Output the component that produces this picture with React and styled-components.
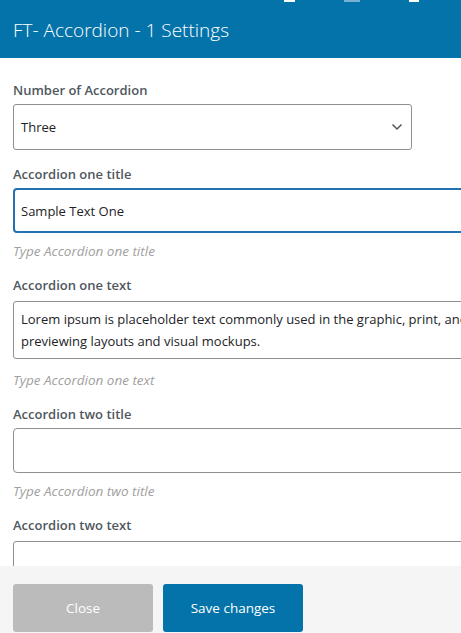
import React from 'react'
import styled, {createGlobalStyle} from 'styled-components'

const GlobalStyle = createGlobalStyle`
  html, body {
    margin: 0;
    padding: 0;
    background: #fff;
  }
  body {
    font-family: "Segoe UI", "Open Sans", sans-serif;
    overflow: hidden;
  }
`

const fields = [
    {label: 'Accordion one title', value: 'Sample Text One', hint: 'Type Accordion one title', focused: true},
    {label: 'Accordion one text', lines: ['Lorem ipsum is placeholder text commonly used in the graphic, print, and publishing industries for', 'previewing layouts and visual mockups.'], hint: 'Type Accordion one text'},
    {label: 'Accordion two title', value: '', hint: 'Type Accordion two title'},
    {label: 'Accordion two text', lines: [], hint: 'Type Accordion two text'},
]

const App = () => {
    return (
        <Page>
            <GlobalStyle />
            <Header>
                <TopMarks>
                    <Mark w={11} />
                    <Mark w={16} faint />
                    <Mark w={10} />
                </TopMarks>
                <Title>FT- Accordion - 1 Settings</Title>
            </Header>
            <Body>
                <Group>
                    <Label>Number of Accordion</Label>
                    <SelectBox>
                        <span>Three</span>
                        <svg width="12" height="8" viewBox="0 0 12 8">
                            <polyline points="1.5,1.5 6,6 10.5,1.5" fill="none" stroke="#50575e" strokeWidth="1.5" />
                        </svg>
                    </SelectBox>
                </Group>
                {fields.map(f => (
                    <Group key={f.label}>
                        <Label>{f.label}</Label>
                        {f.lines ? (
                            <TextArea>
                                {f.lines.map(l => <Line key={l}>{l}</Line>)}
                            </TextArea>
                        ) : (
                            <Input focused={f.focused}>{f.value}</Input>
                        )}
                        <Hint>{f.hint}</Hint>
                    </Group>
                ))}
            </Body>
            <Footer>
                <Button kind="close">Close</Button>
                <Button>Save changes</Button>
            </Footer>
        </Page>
    )
}

const Page = styled.div`
    width: 461px;
    height: 633px;
    display: flex;
    flex-direction: column;
    overflow: hidden;
`

const Header = styled.div`
    position: relative;
    height: 58px;
    flex-shrink: 0;
    background: #0473aa;
    display: flex;
    align-items: center;
    padding: 0 13px;
`

const TopMarks = styled.div`
    position: absolute;
    top: 0;
    left: 284px;
    display: flex;
    gap: 49px;
`

const Mark = styled.div`
    width: ${p => p.w}px;
    height: 2px;
    background: ${p => p.faint ? 'rgba(255,255,255,0.45)' : '#fff'};
`

const Title = styled.h1`
    margin: 2px 0 0;
    font-size: 19px;
    font-weight: 300;
    color: #fff;
    white-space: nowrap;
`

const Body = styled.div`
    flex: 1;
    overflow: hidden;
    padding: 23px 0 0 13px;
`

const Group = styled.div`
    display: flex;
    flex-direction: column;
    align-items: flex-start;
    margin-bottom: 15px;
`

const Label = styled.label`
    font-size: 13px;
    font-weight: 600;
    line-height: 18px;
    color: #50575e;
    margin-bottom: 5px;
`

const SelectBox = styled.div`
    box-sizing: border-box;
    width: 399px;
    height: 46px;
    border: 1px solid #8c8f94;
    border-radius: 3px;
    display: flex;
    align-items: center;
    justify-content: space-between;
    padding: 0 8px 0 7px;
    font-size: 13px;
    color: #1d2327;
`

const Input = styled.div`
    box-sizing: border-box;
    width: 760px;
    height: 45px;
    border: ${p => p.focused ? '2px solid #2271b1' : '1px solid #8c8f94'};
    border-radius: 4px;
    display: flex;
    align-items: center;
    padding: 0 ${p => p.focused ? '6px' : '7px'};
    font-size: 13px;
    color: #1d2327;
`

const TextArea = styled.div`
    box-sizing: border-box;
    width: 760px;
    height: 58px;
    border: 1px solid #8c8f94;
    border-radius: 3px;
    padding: 6px 7px;
    font-size: 13px;
    line-height: 22px;
    color: #1d2327;
    margin: 2px 0 3px;
`

const Line = styled.div`
    white-space: nowrap;
`

const Hint = styled.div`
    margin-top: 9px;
    font-size: 13.5px;
    line-height: 19px;
    font-style: italic;
    color: #a0a0a0;
`

const Footer = styled.div`
    flex-shrink: 0;
    height: 67px;
    box-sizing: border-box;
    background: #f5f5f5;
    display: flex;
    align-items: flex-start;
    gap: 10px;
    padding: 18px 13px 0;
`

const Button = styled.button`
    width: 140px;
    height: 48px;
    border: none;
    border-radius: 3px;
    background: ${p => p.kind === 'close' ? '#bbbbbb' : '#0473aa'};
    color: #fff;
    font-family: inherit;
    font-size: 13.5px;
`

export default App
